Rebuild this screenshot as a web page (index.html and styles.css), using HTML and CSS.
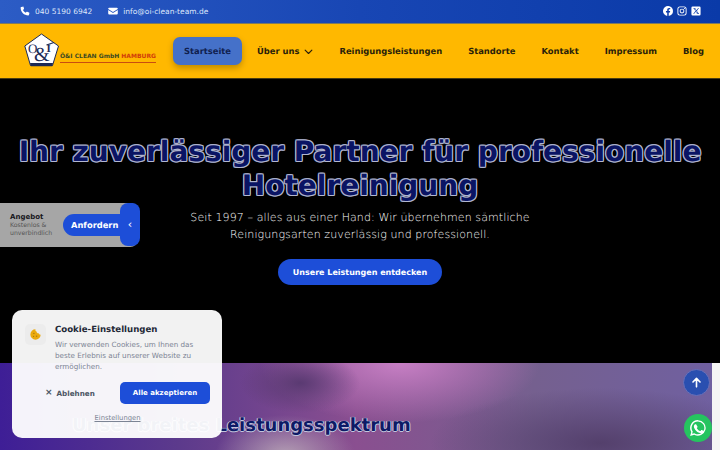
FILE: index.html
```html
<!DOCTYPE html>
<html lang="de">
<head>
<meta charset="utf-8">
<title>O&amp;I Clean GmbH Hamburg</title>
<link rel="stylesheet" href="styles.css">
</head>
<body>
<div class="topbar">
  <div class="contact">
    <span class="contact-item">
      <svg class="ti" viewBox="0 0 24 24"><path d="M6.6 1.5 2.8 2.4C2 2.600 1.500 3.300 1.500 4c0 10.200 8.300 18.500 18.500 18.500.7 0 1.400-.5 1.600-1.300l.9-3.800c.2-.8-.2-1.600-1-1.900l-4.200-1.800c-.7-.3-1.500-.1-2 .5l-1.800 2.200c-2.900-1.400-5.200-3.700-6.600-6.600l2.200-1.800c.6-.5.8-1.300.5-2L8.500 2.500c-.3-.8-1.100-1.200-1.900-1Z"/></svg>
      040 5190 6942
    </span>
    <span class="contact-item">
      <svg class="ti" viewBox="0 0 24 24"><path d="M3 4h18a2.500 2.500 0 0 1 2.500 2.500v.6L12 14.300.5 7.100v-.6A2.500 2.500 0 0 1 3 4Z"/><path d="M.5 9.800V18A2.500 2.500 0 0 0 3 20.500h18a2.500 2.500 0 0 0 2.500-2.500V9.800L12 17Z"/></svg>
      info@oi-clean-team.de
    </span>
  </div>
  <div class="social">
    <svg class="si" viewBox="0 0 24 24"><path d="M24 12a12 12 0 1 0-13.900 11.900v-8.400H7.100V12h3V9.400c0-3 1.800-4.700 4.500-4.700 1.300 0 2.700.2 2.700.2v3h-1.500c-1.500 0-2 .9-2 1.900V12h3.400l-.5 3.500h-2.900v8.400A12 12 0 0 0 24 12Z"/></svg>
    <svg class="si" viewBox="0 0 24 24"><path fill-rule="evenodd" d="M7 1h10a6 6 0 0 1 6 6v10a6 6 0 0 1-6 6H7a6 6 0 0 1-6-6V7a6 6 0 0 1 6-6Zm0 2.200A3.800 3.800 0 0 0 3.200 7v10A3.800 3.800 0 0 0 7 20.800h10a3.800 3.800 0 0 0 3.800-3.800V7A3.800 3.800 0 0 0 17 3.200Zm5 3.100a5.700 5.700 0 1 1 0 11.400 5.700 5.700 0 0 1 0-11.400Zm0 2.200a3.500 3.500 0 1 0 0 7 3.500 3.500 0 0 0 0-7Zm5.900-3.800a1.300 1.300 0 1 1 0 2.600 1.300 1.300 0 0 1 0-2.600Z"/></svg>
    <svg class="si" viewBox="0 0 24 24"><path fill-rule="evenodd" d="M4 1h16a3 3 0 0 1 3 3v16a3 3 0 0 1-3 3H4a3 3 0 0 1-3-3V4a3 3 0 0 1 3-3Zm1.500 4 5.100 6.900L5.400 19h1.700l4.300-5.300 3.500 5.300h4.600l-5.400-7.300L19 5h-1.700l-4 4.900L9.700 5Zm2.300 1.200h1.300l7.200 11.600h-1.300Z"/></svg>
  </div>
</div>

<header class="header">
  <a class="logo">
    <svg class="logo-mark" viewBox="0 0 36 34">
      <path d="M17.500 1 34.500 13 28.500 32.500H6.500L.8 13Z" fill="#fff" stroke="#1d2a55" stroke-width="1"/>
      <path d="M6 30h23l-.8 3.200H6.800Z" fill="#1d2a55"/>
      <text class="lm" x="4" y="20">O<tspan class="lm-amp" dx="-3.500" dy="8">&amp;</tspan><tspan class="lm-i" dx="-3" dy="-9">I</tspan></text>
      <path d="M22.500 12 30 9.500" stroke="#1d2a55" stroke-width="1.200"/>
    </svg>
    <span class="logo-text"><span class="logo-name">Ö&amp;I CLEAN GmbH <em class="logo-city">HAMBURG</em></span></span>
  </a>
  <nav class="nav">
    <a class="nav-item active">Startseite</a>
    <a class="nav-item">Über uns
      <svg class="chev" viewBox="0 0 12 8"><path d="M1.500 1.500 6 6l4.500-4.500" fill="none" stroke="currentColor" stroke-width="1.500" stroke-linecap="round" stroke-linejoin="round"/></svg>
    </a>
    <a class="nav-item">Reinigungsleistungen</a>
    <a class="nav-item">Standorte</a>
    <a class="nav-item">Kontakt</a>
    <a class="nav-item">Impressum</a>
    <a class="nav-item">Blog</a>
  </nav>
</header>

<main>
  <section class="hero">
    <h1 class="hero-title">Ihr zuverlässiger Partner für professionelle Hotelreinigung</h1>
    <p class="hero-sub">Seit 1997 – alles aus einer Hand: Wir übernehmen sämtliche Reinigungsarten zuverlässig und professionell.</p>
    <a class="hero-btn">Unsere Leistungen entdecken</a>
  </section>
  <section class="services">
    <h2 class="services-title">Unser breites Leistungsspektrum</h2>
  </section>
</main>

<aside class="offer">
  <div class="offer-text">
    <strong class="offer-title">Angebot</strong>
    <span class="offer-desc">Kostenlos &amp; unverbindlich</span>
  </div>
  <a class="offer-btn">Anfordern</a>
  <span class="offer-toggle">‹</span>
</aside>

<aside class="cookie">
  <div class="cookie-top">
    <div class="cookie-icon">
      <svg viewBox="0 0 24 24" class="cookie-svg"><path d="M12 2.500a9.500 9.500 0 1 0 9.500 9.800c-2 .2-3.300-.8-3.700-2.500-2 .3-3.900-1.200-3.800-3.300-1.700-.2-2.600-2-2-4Z" fill="#eaaa10"/><circle cx="9" cy="10" r="1.300" fill="#a8760a"/><circle cx="14" cy="15" r="1.300" fill="#a8760a"/><circle cx="8.500" cy="15.500" r="1" fill="#a8760a"/></svg>
    </div>
    <div class="cookie-body">
      <h3 class="cookie-title">Cookie-Einstellungen</h3>
      <p class="cookie-text">Wir verwenden Cookies, um Ihnen das beste Erlebnis auf unserer Website zu ermöglichen.</p>
    </div>
  </div>
  <div class="cookie-actions">
    <a class="cookie-decline"><span class="cookie-x">×</span> Ablehnen</a>
    <a class="cookie-accept">Alle akzeptieren</a>
  </div>
  <a class="cookie-settings">Einstellungen</a>
</aside>

<a class="to-top">
  <svg viewBox="0 0 24 24" class="to-top-svg"><path d="M12 20V5M5.500 11 12 4.500 18.500 11" fill="none" stroke="#fff" stroke-width="3" stroke-linecap="round" stroke-linejoin="round"/></svg>
</a>
<a class="whatsapp">
  <svg viewBox="0 0 24 24" class="wa-svg"><path fill="#fff" fill-rule="evenodd" d="M12 1.500a10.400 10.400 0 0 0-9 15.700L1.500 22.500l5.500-1.400A10.400 10.400 0 1 0 12 1.500Zm0 1.900a8.500 8.500 0 1 1-4.400 15.800l-.4-.2-3 .8.800-3-.2-.4A8.500 8.500 0 0 1 12 3.400Z"/><path fill="#fff" d="M8.700 6.900c-.3 0-.7.100-1 .5-.4.400-1.200 1.100-1.200 2.700s1.200 3.200 1.300 3.400c.2.200 2.300 3.600 5.700 4.900 2.800 1.100 3.400.9 4 .8.600-.1 2-.8 2.200-1.600.3-.8.300-1.400.2-1.600-.1-.1-.3-.2-.6-.4l-2.200-1c-.3-.1-.5-.2-.7.100l-1 1.200c-.2.200-.4.300-.7.100-.3-.1-1.300-.5-2.500-1.500-.9-.8-1.500-1.800-1.700-2.100-.2-.3 0-.5.100-.6l.5-.5c.1-.2.200-.3.300-.5.100-.2 0-.4 0-.6L9.800 7.600c-.2-.6-.5-.6-.7-.6Z"/></svg>
</a>
</body>
</html>
```

FILE: styles.css
```css
* { box-sizing: border-box; }
html, body { margin: 0; padding: 0; height: 100%; overflow: hidden; }
body { position: relative; background: #f5f5f5; font-family: "DejaVu Sans", sans-serif; color: #fff; width: 720px; height: 450px; text-rendering: geometricPrecision; }

.topbar {
  height: 24px; display: flex; align-items: center; justify-content: space-between;
  padding: 0 19px 1px 20px; font-size: 7.500px;
  background: linear-gradient(90deg, #2c5cc5, #1846b4 50%, #0a3aa8);
  border-bottom: 1px solid #7e7a60; color: #dfe7fa;
}
.contact { display: flex; gap: 16px; }
.contact-item { display: flex; align-items: center; gap: 5px; }
.ti { width: 10px; height: 10px; fill: #fff; }
.social { display: flex; gap: 4px; }
.si { width: 10px; height: 10px; fill: #fff; }

.header {
  height: 55px; background: #ffb800; display: flex; align-items: center;
  justify-content: space-between; padding: 0 5px 0 24px; border-bottom: 1px solid #4a3c10;
}
.logo { display: flex; align-items: flex-end; gap: 0; margin-top: -3px; }
.logo-mark { width: 36px; height: 34px; }
.lm { font-family: "Liberation Serif", serif; font-size: 13px; fill: #1d2a55; }
.lm-amp { font-size: 20px; }
.lm-i { font-size: 11px; font-weight: 700; }
.logo-text { font-size: 6px; font-weight: 700; color: #3d4a22; border-bottom: 1px solid #c94d10; padding-bottom: 2px; margin-bottom: 4px; white-space: nowrap; }
.logo-city { font-style: normal; color: #d23c0a; }

.nav { display: flex; gap: 4px; align-items: center; }
.nav-item {
  display: flex; align-items: center; gap: 5px; padding: 8px 11px; height: 28px;
  font-size: 8.400px; font-weight: 700; color: #2a1f0a; white-space: nowrap; border-radius: 7px;
}
.nav-item.active { background: #4571c9; color: #10204f; box-shadow: 0 3px 6px rgba(0,0,0,.25); }
.chev { width: 9px; height: 6px; margin-top: 2px; }

.hero {
  height: 284px; background: #000; display: flex; flex-direction: column; align-items: center;
  padding-top: 56px;
}
.hero-title {
  margin: 0; width: 700px; text-align: center; font-size: 28px; line-height: 34px; font-weight: 700;
  color: #0a1464;
  text-shadow: 1px 0 0 #b4b8d0, -1px 0 0 #b4b8d0, 0 1px 0 #b4b8d0, 0 -1px 0 #b4b8d0, 1px 1px 0 #9aa0c4, -1px -1px 0 #9aa0c4, 1px -1px 0 #9aa0c4, -1px 1px 0 #9aa0c4;
}
.hero-sub {
  margin: 6px 0 0; width: 400px; text-align: center; font-size: 11px; line-height: 17px;
  color: #fff; font-weight: 200; letter-spacing: .1px;
}
.hero-btn {
  margin-top: 16px; height: 26px; padding: 0 15px; display: flex; align-items: center;
  background: #1d4ed8; border-radius: 13px; font-size: 8px; font-weight: 700; color: #fff;
}

.services {
  width: 712px; height: 90px; padding: 51px 0 0 72px;
  background:
    radial-gradient(ellipse 70px 40px at 285px 92px, rgba(205,195,195,.7), transparent),
    radial-gradient(ellipse 60px 30px at 300px 20px, #5a3a72, transparent),
    radial-gradient(ellipse 140px 60px at 400px 0, #c77fc4, transparent),
    radial-gradient(ellipse 170px 55px at 600px 80px, #54406c, transparent),
    linear-gradient(90deg, #3e1e96, #5c3a8c 25%, #8a4f90 50%, #75608f 75%, #7060a0);
}
.services-title {
  margin: 0; font-size: 18px; line-height: 24px; font-weight: 700; color: #0e1a66;
  text-shadow: 0 0 1px #d0d4e8, 1px 0 0 #c0c4dc, -1px 0 0 #c0c4dc, 0 1px 0 #c0c4dc;
}

.offer {
  position: absolute; left: 0; top: 203px; width: 138px; height: 44px;
  background: #a6a6a6; border-radius: 0 8px 8px 0; display: flex; align-items: center; padding-left: 10px;
}
.offer-text { display: flex; flex-direction: column; width: 53px; }
.offer-title { font-size: 7px; line-height: 10px; color: #17171c; }
.offer-desc { font-size: 6.200px; line-height: 8.500px; color: #555; }
.offer-btn {
  position: absolute; left: 63px; top: 11px; width: 66px; height: 22px; background: #1d4ed8; border-radius: 11px 0 0 11px;
  font-size: 8.300px; font-weight: 700; color: #fff; display: flex; align-items: center; padding-left: 8px;
}
.offer-toggle {
  position: absolute; left: 120px; top: 0; width: 20px; height: 43px; background: #1d4ed8; border-radius: 8px;
  display: flex; align-items: center; justify-content: center; color: #fff; font-size: 11px;
}

.cookie {
  position: absolute; left: 12px; top: 310px; width: 210px; height: 128px;
  background: rgba(255,255,255,.95); border-radius: 10px; padding: 14px 12px 0 13px; color: #1f2937;
}
.cookie-top { display: flex; gap: 9px; }
.cookie-icon { width: 21px; height: 21px; flex: none; background: #ececec; border-radius: 5px; display: flex; align-items: center; justify-content: center; }
.cookie-svg { width: 13px; height: 13px; }
.cookie-title { margin: 0 0 2px; font-size: 8.600px; line-height: 13px; font-weight: 700; color: #1f2937; }
.cookie-text { margin: 0; font-size: 7.200px; line-height: 11px; color: #7c8494; }
.cookie-actions { display: flex; align-items: center; justify-content: space-between; margin-top: 10px; }
.cookie-decline { display: flex; gap: 4px; align-items: center; padding-left: 20px; font-size: 7.200px; font-weight: 700; color: #4b5563; }
.cookie-x { font-size: 9px; }
.cookie-accept { width: 90px; height: 22px; background: #1d4ed8; color: #fff; border-radius: 5px; font-size: 7px; font-weight: 700; display: flex; align-items: center; justify-content: center; }
.cookie-settings { display: block; margin-top: 10px; text-align: center; font-size: 6.800px; color: #7c8494; text-decoration: underline; }

.to-top {
  position: absolute; left: 683px; top: 369px; width: 27px; height: 27px; border-radius: 50%;
  background: #2a4fb0; border: 1px solid #6a70b8; display: flex; align-items: center; justify-content: center;
}
.to-top-svg { width: 13px; height: 13px; }
.whatsapp {
  position: absolute; left: 684px; top: 414px; width: 28px; height: 28px; border-radius: 50%;
  background: #25c45f; display: flex; align-items: center; justify-content: center;
}
.wa-svg { width: 18px; height: 18px; }
```
